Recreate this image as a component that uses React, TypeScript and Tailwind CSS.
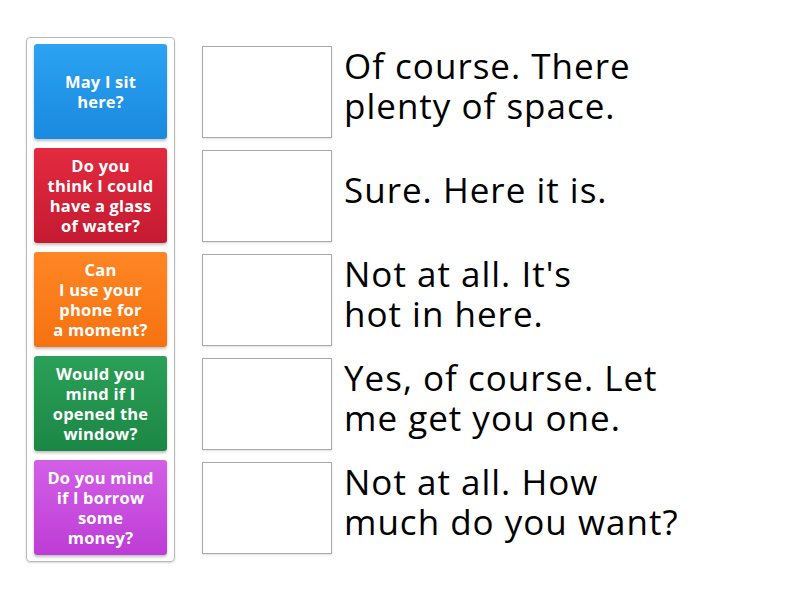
import React from 'react';

const prompts = [
  { lines: ['May I sit', 'here?'], bg: 'bg-gradient-to-b from-[#2ba3f2] to-[#1a89df]' },
  { lines: ['Do you', 'think I could', 'have a glass', 'of water?'], bg: 'bg-gradient-to-b from-[#e42a3f] to-[#c41a31]' },
  { lines: ['Can', 'I use your', 'phone for', 'a moment?'], bg: 'bg-gradient-to-b from-[#ff8624] to-[#f6720f]' },
  { lines: ['Would you', 'mind if I', 'opened the', 'window?'], bg: 'bg-gradient-to-b from-[#2aa058] to-[#1c8745]' },
  { lines: ['Do you mind', 'if I borrow', 'some', 'money?'], bg: 'bg-gradient-to-b from-[#d25fe6] to-[#bd3cd6]' },
];

const answers = [
  ['Of course. There', 'plenty of space.'],
  ['Sure. Here it is.'],
  ["Not at all. It's", 'hot in here.'],
  ['Yes, of course. Let', 'me get you one.'],
  ['Not at all. How', 'much do you want?'],
];

const App: React.FC = () => {
  return (
    <div className="w-[800px] h-[600px] bg-white flex items-start pt-[37px] pl-[26px] font-['Open_Sans',sans-serif]">
      {/* Draggable prompt cards */}
      <div className="w-[149px] h-[525px] border border-[#b8b8b8] rounded-[4px] px-[7px] pt-[6px] flex flex-col gap-[9px] shadow-[0_1px_2px_rgba(0,0,0,0.15)]">
        {prompts.map((p, i) => (
          <div
            key={i}
            className={`${p.bg} h-[95px] rounded-[3px] flex items-center justify-center text-center text-white font-bold text-[16.5px] leading-[20px] tracking-[0.2px] whitespace-nowrap shadow-[0_2px_3px_rgba(0,0,0,0.25)]`}
          >
            <p>
              {p.lines.map((l, j) => (
                <React.Fragment key={j}>
                  {j > 0 && <br />}
                  {l}
                </React.Fragment>
              ))}
            </p>
          </div>
        ))}
      </div>

      {/* Drop targets + answers */}
      <div className="ml-[27px] pt-[9px] flex flex-col gap-[12px]">
        {answers.map((a, i) => (
          <div key={i} className="flex items-center h-[92px]">
            <div className="w-[130px] h-[92px] border border-[#a9a9a9] shadow-[0_1px_2px_rgba(0,0,0,0.12)] shrink-0" />
            <p className="ml-[12px] pb-[12px] text-[35px] leading-[40px] tracking-[1px] text-black whitespace-nowrap">
              {a.map((l, j) => (
                <React.Fragment key={j}>
                  {j > 0 && <br />}
                  {l}
                </React.Fragment>
              ))}
            </p>
          </div>
        ))}
      </div>
    </div>
  );
};

export default App;
